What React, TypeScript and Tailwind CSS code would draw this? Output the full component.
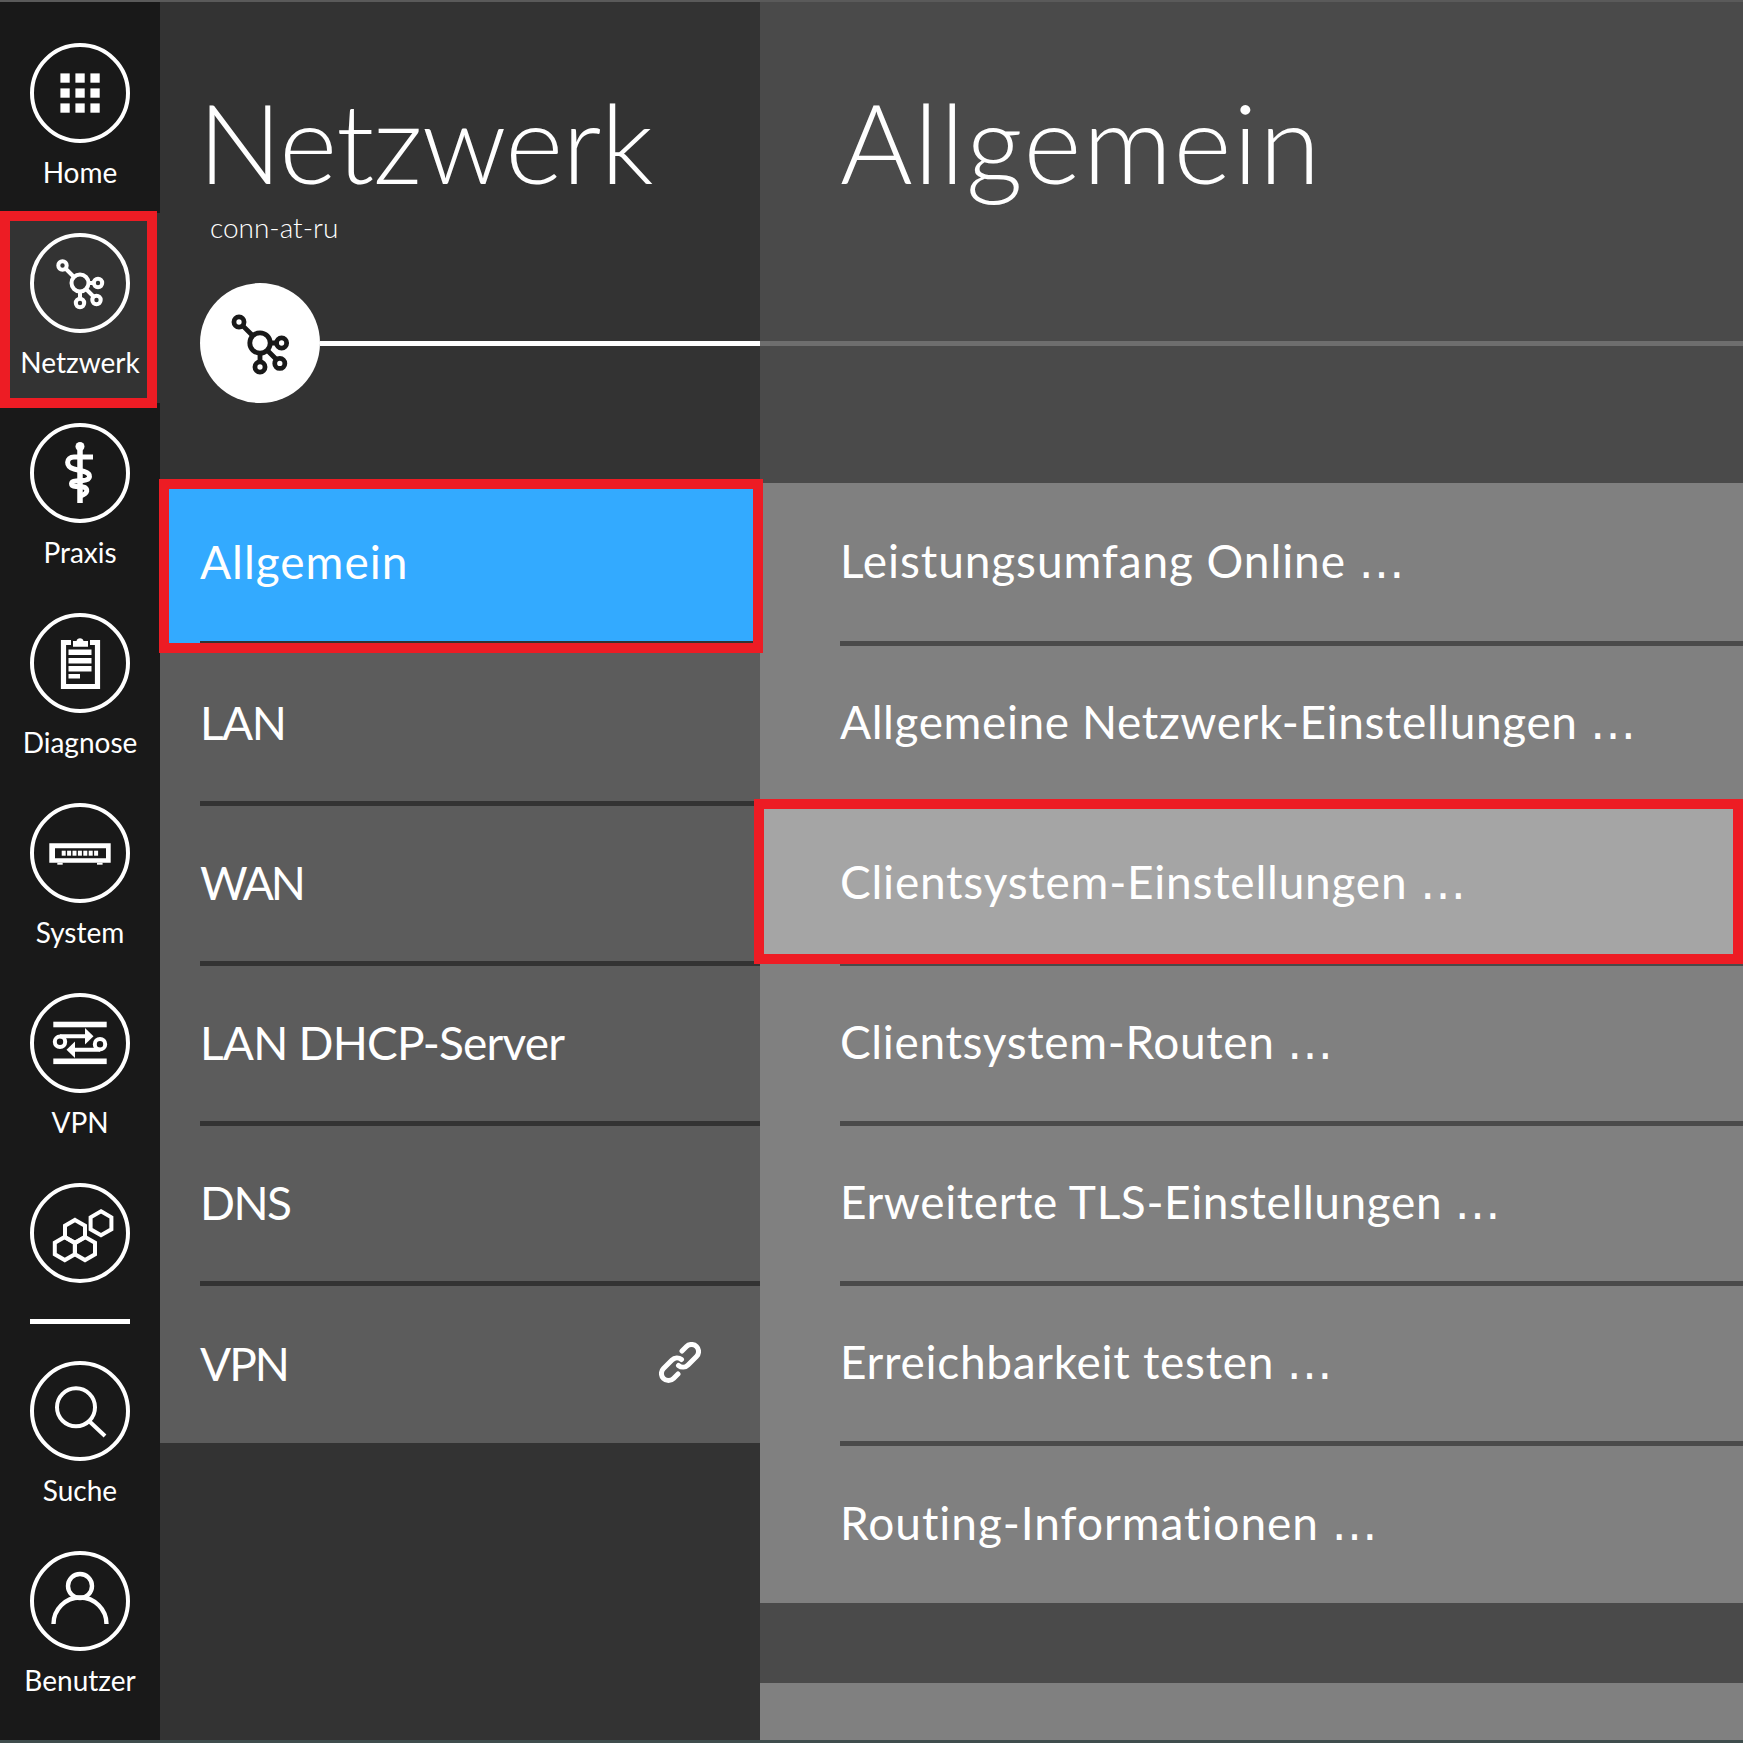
import React from 'react';

const hexPoints = (cx: number, cy: number, r: number) =>
    [0, 1, 2, 3, 4, 5].map(i => {
        const a = (Math.PI / 3) * i - Math.PI / 2;
        return `${(cx + r * Math.cos(a)).toFixed(1)},${(cy + r * Math.sin(a)).toFixed(1)}`;
    }).join(' ');

const NetworkGlyph: React.FC = () => (
    <g fill="none" stroke="currentColor" strokeWidth="4">
        <path d="M35.5 35.5 L44 44 M59 50 H63.5 M56 56 L63.5 63.5 M50 59 V65" />
        <circle cx="50" cy="50" r="8.5" />
        <circle cx="32.5" cy="32.5" r="4.2" />
        <circle cx="68" cy="50" r="4.2" />
        <circle cx="66.5" cy="67" r="4.2" />
        <circle cx="50" cy="70" r="4.2" />
    </g>
);

const HomeGlyph = () => (
    <g fill="currentColor">
        {[30.4, 45.4, 60.4].map(y => [30.4, 45.4, 60.4].map(x => <rect key={`${x}-${y}`} x={x} y={y} width="9.3" height="9.3" />))}
    </g>
);

const PraxisGlyph = () => (
    <g>
        <circle cx="50" cy="23.5" r="4.5" fill="currentColor" />
        <path d="M50 24 V80" stroke="currentColor" strokeWidth="5.5" fill="none" />
        <path d="M63 34 H44 C36 34 35 44 44 46 L54 48.5 C62 51 61 57 53 57.5 L46 58 C40 58.5 40 63 46 63.5 L53 64 C59 65 58 71 50 73" stroke="currentColor" strokeWidth="5" fill="none" />
    </g>
);

const DiagnoseGlyph = () => (
    <g>
        <path d="M41 29.5 H33.5 V73.5 H67.5 V29.5 H60" stroke="currentColor" strokeWidth="5.2" fill="none" />
        <path d="M43 33.7 V28 H46.5 a3.6 3.6 0 0 1 7 0 H58 V33.7 Z" fill="currentColor" />
        <g fill="currentColor">
            <rect x="38.5" y="36.5" width="23" height="5.5" />
            <rect x="38.5" y="45" width="23" height="5.5" />
            <rect x="38.5" y="53" width="23" height="5.5" />
            <rect x="38.5" y="61" width="11.5" height="4.5" />
        </g>
    </g>
);

const SystemGlyph = () => (
    <g fill="currentColor">
        <path fillRule="evenodd" d="M19.3 40.3 H80.7 V59.7 H19.3 Z M25 45.3 V55.3 H76 V45.3 Z" />
        {[0, 1, 2, 3, 4, 5, 6].map(i => <rect key={i} x={31.7 + i * 5.4} y="47.7" width="4" height="5" />)}
        <rect x="27.3" y="59.7" width="5.4" height="2" />
        <rect x="67" y="59.7" width="5.6" height="2" />
    </g>
);

const VpnGlyph = () => (
    <g>
        <rect x="23.3" y="28.7" width="53.4" height="5.6" fill="currentColor" />
        <rect x="23.3" y="65.5" width="53.4" height="5.6" fill="currentColor" />
        <g fill="none" stroke="currentColor" strokeWidth="4">
            <circle cx="30" cy="48.8" r="5.2" />
            <circle cx="70" cy="51.2" r="5.2" />
            <path d="M30 43.2 H58 M70 56.8 H42" />
        </g>
        <path d="M55 35 L63.5 43.2 L55 51.5 Z" fill="currentColor" />
        <path d="M45 48.5 L36.5 56.8 L45 65 Z" fill="currentColor" />
    </g>
);

const HexGlyph = () => (
    <g fill="none" stroke="currentColor" strokeWidth="4">
        <polygon points={hexPoints(45, 48.5, 11.6)} />
        <polygon points={hexPoints(34.8, 65.5, 11.6)} />
        <polygon points={hexPoints(55, 65.5, 11.6)} />
        <polygon points={hexPoints(71, 40.3, 12)} />
    </g>
);

const SearchGlyph = () => (
    <g fill="none" stroke="currentColor" strokeWidth="4">
        <circle cx="46" cy="46.3" r="19" />
        <path d="M59.3 60.3 L75 75" />
    </g>
);

const UserGlyph = () => (
    <g fill="none" stroke="currentColor" strokeWidth="4.4">
        <circle cx="50" cy="35" r="12" />
        <path d="M23.5 73 a26.5 26.5 0 0 1 53 0" />
    </g>
);

const NavIcon: React.FC<{ children: React.ReactNode }> = ({ children }) => (
    <svg viewBox="0 0 100 100" className="w-[100px] h-[100px] text-white block">
        <circle cx="50" cy="50" r="48" fill="none" stroke="currentColor" strokeWidth="4" />
        {children}
    </svg>
);

const NavItem: React.FC<{ label?: string; active?: boolean; children: React.ReactNode }> = ({ label, active, children }) => (
    <div className={`relative h-[190px] pt-5 flex flex-col items-center ${active ? 'bg-[#333333]' : ''}`}>
        <NavIcon>{children}</NavIcon>
        {label && <span className="relative z-10 mt-3 h-[34px] leading-[34px] text-[28px] text-white">{label}</span>}
        {active && <div className="absolute -top-0.5 left-0 right-[3px] -bottom-[5px] border-10 border-[#ed1c24]" />}
    </div>
);

const Sidebar = () => (
    <aside className="w-[160px] shrink-0 bg-[#191919] pt-[21px]">
        <NavItem label="Home"><HomeGlyph /></NavItem>
        <NavItem label="Netzwerk" active><NetworkGlyph /></NavItem>
        <NavItem label="Praxis"><PraxisGlyph /></NavItem>
        <NavItem label="Diagnose"><DiagnoseGlyph /></NavItem>
        <NavItem label="System"><SystemGlyph /></NavItem>
        <NavItem label="VPN"><VpnGlyph /></NavItem>
        <div className="h-[156px] pt-5 flex justify-center"><NavIcon><HexGlyph /></NavIcon></div>
        <div className="mx-[30px] h-[5px] bg-white mb-[17px]" />
        <NavItem label="Suche"><SearchGlyph /></NavItem>
        <NavItem label="Benutzer"><UserGlyph /></NavItem>
    </aside>
);

const LinkIcon = () => (
    <svg viewBox="0 0 42 42" className="w-[42px] h-[42px] text-white" fill="none" stroke="currentColor" strokeWidth="5" strokeLinecap="round">
        <path d="M23 9 l4.5 -4.5 a7 7 0 0 1 10 10 L29 23 a7 7 0 0 1 -9.5 .5" />
        <path d="M19 32 l-4.5 4.5 a7 7 0 0 1 -10 -10 L13 18 a7 7 0 0 1 9.5 -.5" />
    </svg>
);

const menuItems = [
    { label: 'Allgemein', spacing: 'tracking-[1px]' },
    { label: 'LAN', spacing: 'tracking-[-1.5px]' },
    { label: 'WAN', spacing: 'tracking-[-3px]' },
    { label: 'LAN DHCP-Server', spacing: 'tracking-[-0.8px]' },
    { label: 'DNS', spacing: 'tracking-[-1.5px]' },
    { label: 'VPN', spacing: 'tracking-[-2px]' },
];

const MenuColumn = () => (
    <section className="w-[600px] shrink-0 bg-[#333333] flex flex-col">
        <header className="h-[481px] shrink-0">
            <h1 className="pl-[38px] pt-[74px] h-[208px] text-[111px] leading-[130px] font-light tracking-[-0.8px] text-white">Netzwerk</h1>
            <p className="pl-[50px] h-[34px] text-[28px] leading-[34px] font-light text-white">conn-at-ru</p>
            <div className="pl-10 pt-[39px] flex items-center">
                <div className="w-[120px] h-[120px] rounded-full bg-white shrink-0">
                    <svg viewBox="0 0 100 100" className="w-[120px] h-[120px] text-[#191919]"><NetworkGlyph /></svg>
                </div>
                <div className="flex-1 h-[5px] bg-white" />
            </div>
        </header>
        <ul className="bg-[#5c5c5c]">
            {menuItems.map((item, i) => (
                <li key={item.label} className={`relative flex items-center ${i === 0 ? 'h-[163px] pb-[7px]' : i === 5 ? 'h-[157px] pb-[3px]' : 'h-[160px] pb-[7px]'}`}>
                    {i === 0 && (
                        <div className="absolute -top-1 -left-px -right-[3px] -bottom-[7px] z-10 border-10 border-[#ed1c24] bg-[#33aaff]">
                            <div className="absolute left-[31px] right-0 bottom-0 h-[2px] bg-[#333333]" />
                        </div>
                    )}
                    <span className={`relative z-20 pl-10 text-[46px] text-white ${item.spacing}`}>{item.label}</span>
                    {i === 5 && <span className="absolute right-[59px] top-[56px]"><LinkIcon /></span>}
                    {i > 0 && i < 5 && <div className="absolute left-10 right-0 bottom-0 h-[5px] bg-[#333333]" />}
                </li>
            ))}
        </ul>
    </section>
);

const actionItems = [
    { label: 'Leistungsumfang Online', spacing: 'tracking-[0.9px]' },
    { label: 'Allgemeine Netzwerk-Einstellungen', spacing: 'tracking-[0.6px]' },
    { label: 'Clientsystem-Einstellungen', spacing: 'tracking-[0.77px]' },
    { label: 'Clientsystem-Routen', spacing: 'tracking-[0.64px]' },
    { label: 'Erweiterte TLS-Einstellungen', spacing: 'tracking-[0.6px]' },
    { label: 'Erreichbarkeit testen', spacing: 'tracking-[0.7px]' },
    { label: 'Routing-Informationen', spacing: 'tracking-[0.95px]' },
];

const DetailColumn = () => (
    <section className="flex-1 bg-[#4a4a4a] flex flex-col">
        <header className="h-[481px] shrink-0">
            <h1 className="pl-[80px] pt-[74px] h-[204px] text-[111px] leading-[130px] font-light tracking-[1.5px] text-white">Allgemein</h1>
            <div className="mt-[135px] h-[5px] bg-[#6e6e6e]" />
        </header>
        <ul className="bg-[#808080]">
            {actionItems.map((item, i) => (
                <li key={item.label} className={`relative flex items-center ${i === 0 ? 'h-[163px] pb-[7px]' : i === 6 ? 'h-[157px] pb-[2px]' : 'h-[160px] pb-[7px]'}`}>
                    {i === 2 && <div className="absolute -top-[7px] -left-1.5 right-0 bottom-[2px] z-10 border-10 border-[#ed1c24] bg-[#a5a5a5]" />}
                    <span className={`relative z-20 pl-[80px] text-[46px] text-white ${item.spacing}`}>
                        {item.label} <span className="font-['DejaVu_Sans',sans-serif]">…</span>
                    </span>
                    {i < 6 && <div className="absolute left-[80px] right-0 bottom-0 h-[5px] bg-[#4a4a4a]" />}
                </li>
            ))}
        </ul>
        <div className="mt-[80px] flex-1 bg-[#808080]" />
    </section>
);

export default function App() {
    return (
        <div className="w-[1743px] h-[1743px] overflow-hidden flex flex-col bg-[#333333] font-['Lato',sans-serif]">
            <div className="h-[2px] bg-[#5a5a5a] shrink-0" />
            <main className="flex flex-1 min-h-0">
                <Sidebar />
                <MenuColumn />
                <DetailColumn />
            </main>
            <div className="h-[3px] bg-[#3f4d4d] shrink-0" />
        </div>
    );
}
